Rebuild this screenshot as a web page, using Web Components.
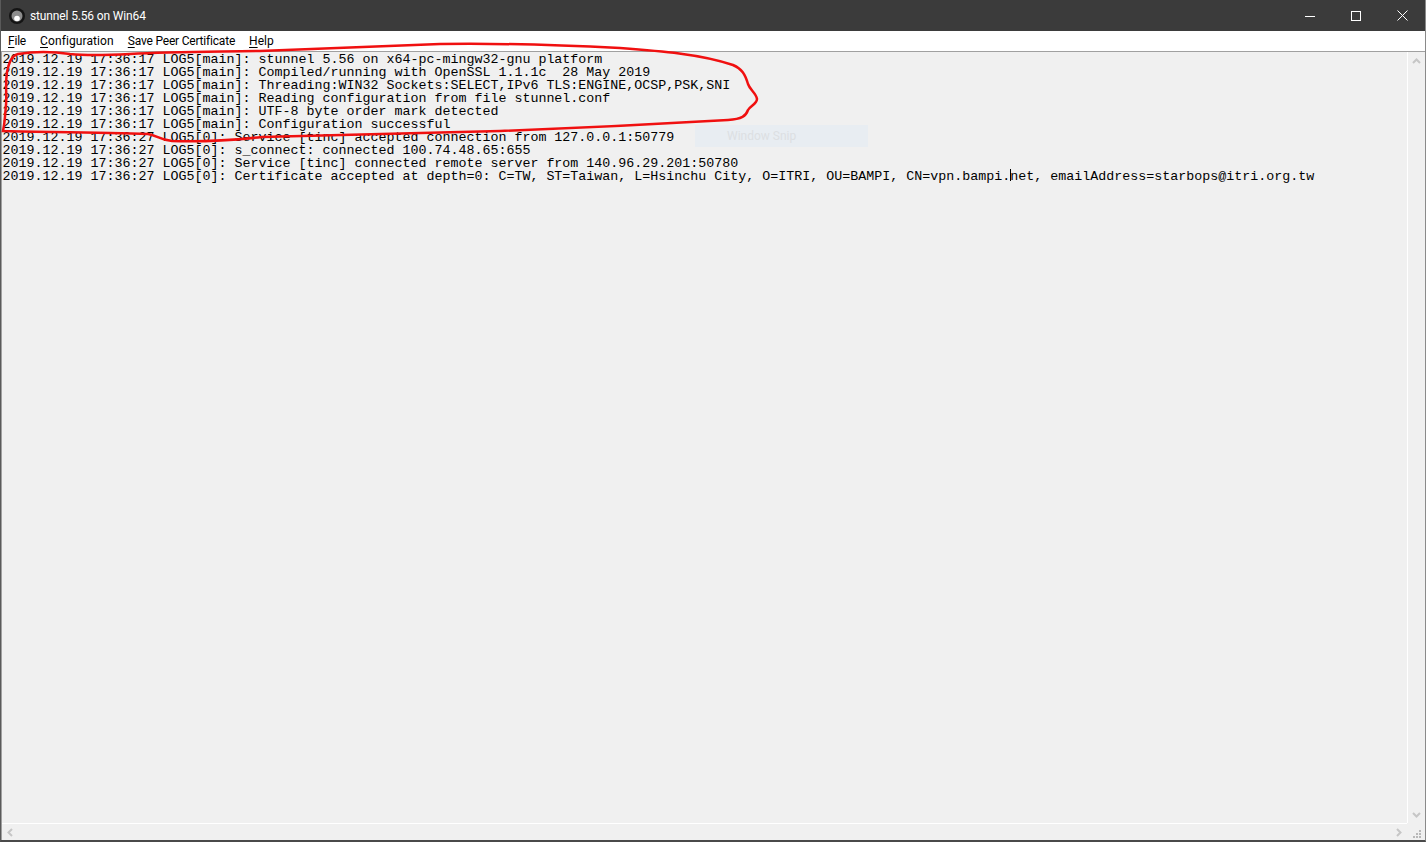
<!DOCTYPE html>
<html>
<head>
<meta charset="utf-8">
<title>stunnel 5.56 on Win64</title>
<style>
    html, body { margin: 0; height: 100%; overflow: hidden; background: #f0f0f0; }
</style>
</head>
<body>
<app-window>
    <title-bar slot="title">stunnel 5.56 on Win64</title-bar>
    <menu-bar slot="menu"></menu-bar>
    <log-view slot="log"></log-view>
</app-window>

<script>
class AppWindow extends HTMLElement
{
    constructor()
    {
        super();
        this.attachShadow({ mode: 'open' });
        this.shadowRoot.innerHTML = `
            <style>
                :host {
                    display: flex;
                    flex-direction: column;
                    box-sizing: border-box;
                    width: 1426px;
                    height: 842px;
                    border-left: 1px solid #5a5a5a;
                    border-right: 1px solid #8a8a8a;
                    border-bottom: 2px solid #4a4a4a;
                }
            </style>
            <slot name="title"></slot>
            <slot name="menu"></slot>
            <slot name="log"></slot>
        `;
    }
}

class TitleBar extends HTMLElement
{
    constructor()
    {
        super();
        this.attachShadow({ mode: 'open' });
        this.shadowRoot.innerHTML = `
            <style>
                :host {
                    display: flex;
                    align-items: center;
                    height: 31px;
                    flex: none;
                    background: #3b3b3b;
                    color: #fff;
                    font: 12px Roboto, sans-serif;
                }
                .icon { width: 16px; height: 16px; margin: 1px 5px 0 8px; }
                .label { flex: 1; letter-spacing: -0.14px; }
                .buttons { display: flex; }
                .buttons div { width: 46px; height: 31px; display: flex; align-items: center; justify-content: center; }
                svg { display: block; }
            </style>
            <svg class="icon" viewBox="0 0 16 16">
                <circle cx="8" cy="8" r="8" fill="#141414"/>
                <circle cx="8" cy="8" r="5.5" fill="#8c8c8c"/>
                <circle cx="8" cy="10.500" r="2.800" fill="#fff"/>
            </svg>
            <div class="label"><slot></slot></div>
            <div class="buttons">
                <div><svg width="10" height="10" viewBox="0 0 10 10"><path d="M0 5.5h10" stroke="#fff" fill="none"/></svg></div>
                <div><svg width="10" height="10" viewBox="0 0 10 10"><rect x=".5" y=".5" width="9" height="9" stroke="#fff" fill="none"/></svg></div>
                <div><svg width="11" height="11" viewBox="0 0 11 11"><path d="M.5 .5l10 10M10.500 .5l-10 10" stroke="#fff" fill="none"/></svg></div>
            </div>
        `;
    }
}

class MenuBar extends HTMLElement
{
    constructor()
    {
        super();
        this.attachShadow({ mode: 'open' });
        // key, rest of label, letter-spacing to fit the native menu widths
        const items = [['F', 'ile', -0.2], ['C', 'onfiguration', 0.1], ['S', 'ave Peer Certificate', -0.2], ['H', 'elp', 0]];
        this.shadowRoot.innerHTML = `
            <style>
                :host {
                    display: flex;
                    align-items: center;
                    height: 20px;
                    flex: none;
                    background: #fff;
                    color: #000;
                    font: 12px Roboto, sans-serif;
                    border-bottom: 1px solid #a0a0a0;
                }
                span { padding: 0 7px; white-space: pre; }
                u { text-underline-offset: 2px; }
            </style>
            ${items.map(([key, rest, ls]) => `<span style="letter-spacing:${ls}px"><u>${key}</u>${rest}</span>`).join('')}
        `;
    }
}

class ScrollBar extends HTMLElement
{
    constructor()
    {
        super();
        this.attachShadow({ mode: 'open' });
        const vertical = this.getAttribute('orient') === 'vertical';
        this.shadowRoot.innerHTML = `
            <style>
                :host {
                    display: flex;
                    flex: none;
                    justify-content: space-between;
                    align-items: center;
                    box-sizing: border-box;
                    background: #f0f0f0;
                }
                :host([orient=vertical]) {
                    flex-direction: column;
                    border-left: 1px solid #fff;
                    padding: 6px 1px 5px 0;
                }
                :host([orient=horizontal]) {
                    border-top: 1px solid #fff;
                    padding: 0 5px 0 5px;
                }
                svg { display: block; }
            </style>
            ${vertical
                ? `<svg width="9" height="6" viewBox="0 0 9 6"><path d="M1 5l3.500-3.500L8 5" stroke="#c6c6c6" stroke-width="2" fill="none"/></svg>
                   <svg width="9" height="6" viewBox="0 0 9 6"><path d="M1 1l3.500 3.500L8 1" stroke="#c6c6c6" stroke-width="2" fill="none"/></svg>`
                : `<svg width="6" height="9" viewBox="0 0 6 9"><path d="M5 1L1.500 4.500 5 8" stroke="#c6c6c6" stroke-width="2" fill="none"/></svg>
                   <svg width="6" height="9" viewBox="0 0 6 9"><path d="M1 1l3.500 3.500L1 8" stroke="#c6c6c6" stroke-width="2" fill="none"/></svg>`}
        `;
    }
}

class LogView extends HTMLElement
{
    #lines = [
        '2019.12.19 17:36:17 LOG5[main]: stunnel 5.56 on x64-pc-mingw32-gnu platform',
        '2019.12.19 17:36:17 LOG5[main]: Compiled/running with OpenSSL 1.1.1c  28 May 2019',
        '2019.12.19 17:36:17 LOG5[main]: Threading:WIN32 Sockets:SELECT,IPv6 TLS:ENGINE,OCSP,PSK,SNI',
        '2019.12.19 17:36:17 LOG5[main]: Reading configuration from file stunnel.conf',
        '2019.12.19 17:36:17 LOG5[main]: UTF-8 byte order mark detected',
        '2019.12.19 17:36:17 LOG5[main]: Configuration successful',
        '2019.12.19 17:36:27 LOG5[0]: Service [tinc] accepted connection from 127.0.0.1:50779',
        '2019.12.19 17:36:27 LOG5[0]: s_connect: connected 100.74.48.65:655',
        '2019.12.19 17:36:27 LOG5[0]: Service [tinc] connected remote server from 140.96.29.201:50780',
        '2019.12.19 17:36:27 LOG5[0]: Certificate accepted at depth=0: C=TW, ST=Taiwan, L=Hsinchu City, O=ITRI, OU=BAMPI, CN=vpn.bampi.net, emailAddress=starbops@itri.org.tw',
    ];

    constructor()
    {
        super();
        this.attachShadow({ mode: 'open' });
        this.shadowRoot.innerHTML = `
            <style>
                :host {
                    position: relative;
                    display: grid;
                    grid-template-columns: 1fr 18px;
                    grid-template-rows: 1fr 17px;
                    flex: 1;
                    min-height: 0;
                    background: #f0f0f0;
                    border-left: 1px solid #a0a0a0;
                }
                .text {
                    padding: 1px 0 0 0.5px;
                    font: 13.333px/13px "Liberation Mono", monospace;
                    color: #000;
                    white-space: pre;
                    overflow: hidden;
                }
                .text div { width: max-content; height: 13px; }
                .corner { display: flex; align-items: flex-end; justify-content: flex-end; padding: 0 3px 1px 0; }
                .snip {
                    position: absolute;
                    left: 693px;
                    top: 73px;
                    width: 173px;
                    height: 22px;
                    display: flex;
                    align-items: center;
                    padding-left: 32px;
                    box-sizing: border-box;
                    background: #e8edf2;
                    color: #dcdfe2;
                    font: 12px Roboto, sans-serif;
                }
                .caret { position: absolute; left: 1008px; top: 117px; width: 1px; height: 12px; background: #000; }
                .scribble { position: absolute; left: -2px; top: -52px; pointer-events: none; }
            </style>
            <div class="text">${this.#lines.map(line => `<div>${line}</div>`).join('')}</div>
            <scroll-bar orient="vertical"></scroll-bar>
            <scroll-bar orient="horizontal"></scroll-bar>
            <div class="corner">
                <svg width="10" height="10" viewBox="0 0 10 10" fill="#b8b8b8">
                    <rect x="7" y="1" width="2" height="2"/>
                    <rect x="4" y="4" width="2" height="2"/><rect x="7" y="4" width="2" height="2"/>
                    <rect x="1" y="7" width="2" height="2"/><rect x="4" y="7" width="2" height="2"/><rect x="7" y="7" width="2" height="2"/>
                </svg>
            </div>
            <div class="snip">Window Snip</div>
            <div class="caret"></div>
            <svg class="scribble" width="800" height="160" viewBox="0 0 800 160">
                <path d="M3 131 C30 132 100 132 148 134 C156 135 160 140 172 141 C195 142 225 141 262 137
                         C340 135 420 133 500 131 C580 128 660 124 728 120 C742 119 746 116 748 110
                         C750 106 757 104 757 99 C756 93 750 90 748 84 C745 74 742 69 733 65
                         C700 54 660 51 620 48 C560 45 500 43 440 44 C380 46 320 49 260 51
                         C200 52 170 52 130 54 C110 55 90 56 70 54 C50 51 30 52 18 54
                         C11 56 9 63 7 72 C5 85 7 95 6 105 C5 115 5 122 3 131 Z"
                      fill="none" stroke="#f01010" stroke-width="2.500"/>
            </svg>
        `;
    }
}

customElements.define('scroll-bar', ScrollBar);
customElements.define('app-window', AppWindow);
customElements.define('title-bar', TitleBar);
customElements.define('menu-bar', MenuBar);
customElements.define('log-view', LogView);
</script>
</body>
</html>
